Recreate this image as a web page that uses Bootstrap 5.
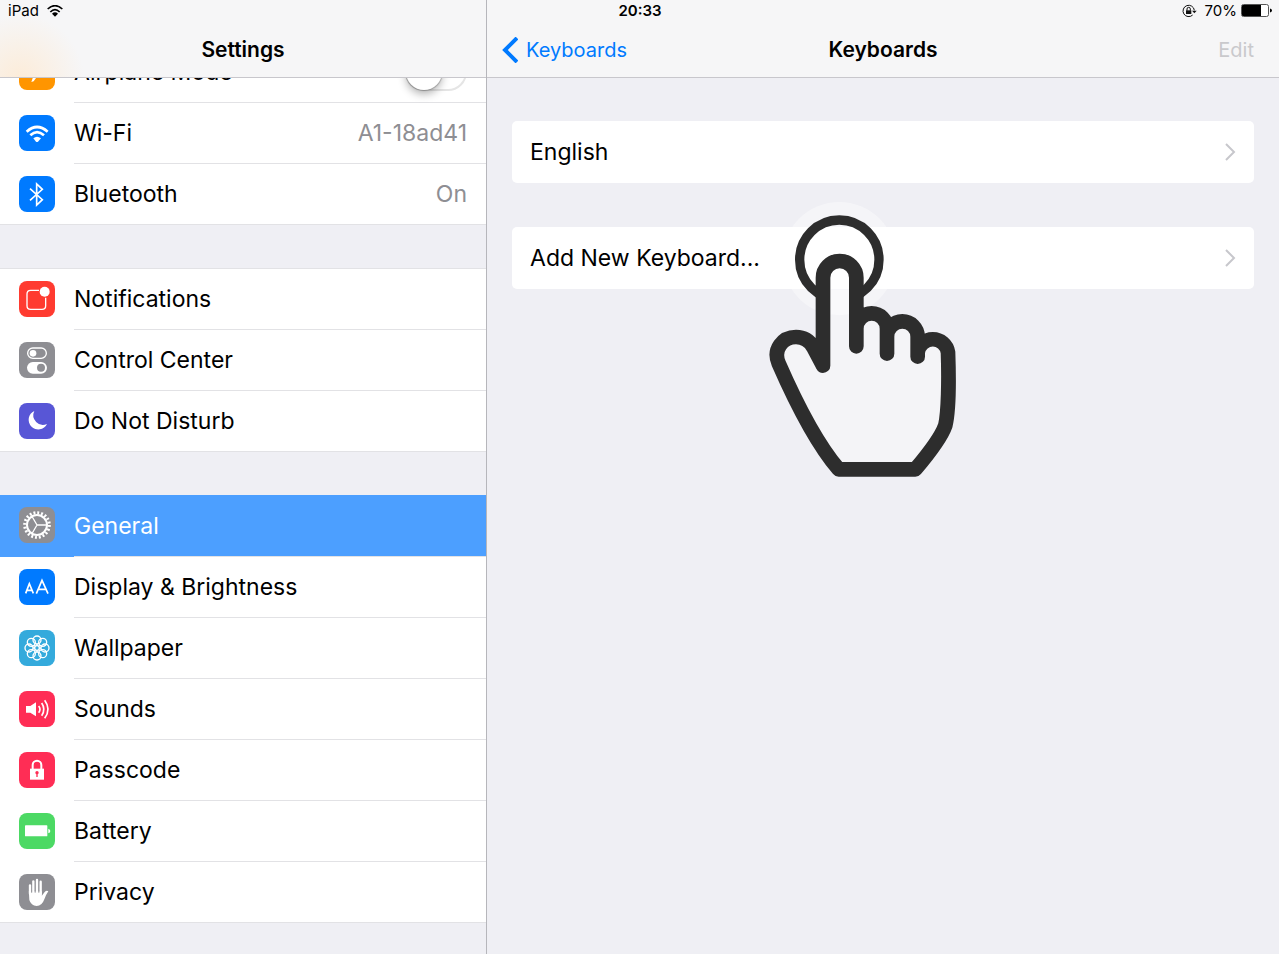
<!DOCTYPE html>
<html lang="en">
<head>
<meta charset="utf-8">
<meta name="viewport" content="width=device-width, initial-scale=1">
<title>Settings – Keyboards</title>
<link href="https://cdn.jsdelivr.net/npm/bootstrap@5.3.0/dist/css/bootstrap.min.css" rel="stylesheet">
<style>
  :root { --ios-blue: #007aff; --ios-bg: #efeff4; --ios-line: #c8c7cc; --ios-sep: #e2e2e5; --ios-gray: #8e8e93; }
  body { font-family: Inter, "Liberation Sans", sans-serif; font-size: 23px; line-height: 28px; color: #000; background: var(--ios-bg); }
  a { color: inherit; text-decoration: none; }
  .status-bar { height: 21px; font-size: 15px; line-height: 20px; padding: 0 7px 0 8px; z-index: 20; }
  .side { flex: 0 0 38%; min-width: 0; overflow: hidden; }
  .detail { min-width: 0; border-left: 1px solid #b6b6bb; }
  .bar { height: 78px; padding-top: 22px; background-color: #f6f6f7; border-bottom: 1px solid var(--ios-line); z-index: 5; }
  .side .bar { background-image: radial-gradient(circle at 20px 78px, #fcecd9 0, #f9f1e8 32px, rgba(246,246,247,0) 64px); }
  .bar h1, .bar h2 { font-size: 21px; line-height: 28px; font-weight: 600; }
  .bar a, .bar button { font-size: 20px; line-height: 28px; }
  .bar .back { color: var(--ios-blue); padding-left: 15px; gap: 8px; }
  .bar .edit { color: #c9c9cc; padding: 0 25px; border: 0; background: none; }
  .menu { margin-top: -37px; gap: 43px; padding-bottom: 30px; }
  .group { background: #fff; border: solid var(--ios-sep); border-width: 1px 0; }
  .entry { height: 61px; padding-left: 19px; gap: 19px; background: #fff; }
  .group .entry:last-child { height: 60px; }
  .entry-body { border-bottom: 1px solid var(--ios-sep); padding-right: 19px; }
  .entry:last-child .entry-body { border-bottom: 0; }
  .entry.selected { margin-top: -1px; height: 62px; background: #4c9fff; color: #fff; }
  .entry-value { color: var(--ios-gray); }
  .tile { width: 36px; height: 36px; flex: none; align-self: flex-start; margin-top: 12px; border-radius: 8px; display: block; }
  .toggle { appearance: none; width: 62px; height: 38px; margin: 0; border: 2px solid #e5e5e5; border-radius: 19px; background: #fff; }
  .toggle::before { content: ""; display: block; width: 36px; height: 36px; margin: -1px; border-radius: 50%; background: #fff; box-shadow: 0 0 1px 1px rgba(0,0,0,.2), 0 4px 8px rgba(0,0,0,.3); }
  .toggle:checked { background: #4cd964; }
  .toggle:checked::before { margin-left: 23px; }
  .content { padding: 43px 25px; gap: 44px; }
  .choice { height: 62px; padding: 0 18px; border-radius: 5px; background: #fff; }
  .tap { left: calc(50% - 143px); top: -37px; pointer-events: none; }
</style>
</head>
<body>
<div class="status-bar position-absolute top-0 start-0 end-0 d-flex align-items-center">
  <div class="d-flex align-items-center flex-fill w-50 gap-2">
    <span>iPad</span>
    <svg width="16" height="12" viewBox="0 0 48 36" fill="none" stroke="#000" stroke-width="5" aria-hidden="true"><path d="M2 12Q24-8 46 12M10 21Q24 7 38 21"/><path d="M15 26Q24 18 33 26L24 35Z" fill="#000" stroke="none"/></svg>
  </div>
  <span class="fw-semibold">20:33</span>
  <div class="d-flex align-items-center justify-content-end flex-fill w-50">
    <svg class="me-2" width="15" height="14" viewBox="0 0 45 42" fill="none" stroke="#111" aria-hidden="true"><path d="M32 33A17 17 0 1 1 37 19" stroke-width="3"/><path d="M30 20H44L37 28Z" fill="#111" stroke="none"/><path d="M12 19H28V30H12Z" fill="#111" stroke="none"/><path d="M15 20V15a5 5 0 0 1 10 0V20" stroke-width="3"/></svg>
    <span class="me-1">70%</span>
    <svg width="31" height="13" viewBox="0 0 31 13" aria-hidden="true"><rect x=".5" y=".5" width="27" height="12" rx="2" fill="#fff" stroke="#555"/><path d="M1 1.500Q1 1 2 1H20V12H2Q1 12 1 11Z"/><path d="M29 4.500Q31 5 31 6.500T29 8.500Z"/></svg>
  </div>
</div>

<div class="d-flex min-vh-100">
  <nav class="side" aria-label="Settings">
    <header class="bar position-relative d-flex align-items-center justify-content-center">
      <h1 class="m-0">Settings</h1>
    </header>
    <div class="menu d-flex flex-column">
      <div class="group">
        <div class="entry d-flex align-items-center">
          <svg class="tile" viewBox="0 0 108 108" style="background:#ff9500" aria-hidden="true"><path d="M88 46L64 54L44 82L37 84L46 58L28 60L22 67L18 65L21 54L16 43L20 41L28 48L45 46L33 22L39 20L61 43Z" fill="#fff"/></svg>
          <div class="entry-body d-flex align-items-center flex-fill h-100">
            <label class="me-auto" for="airplane">Airplane Mode</label>
            <input class="toggle" type="checkbox" role="switch" id="airplane">
          </div>
        </div>
        <a href="#" class="entry d-flex align-items-center">
          <svg class="tile" viewBox="0 0 108 108" style="background:#007aff" aria-hidden="true"><g fill="none" stroke="#fff" stroke-width="8"><path d="M23 50Q54 22 86 50M34 61Q54 42 75 61"/></g><path d="M43 70Q54 61 66 70L57 80Q54 82 51 80Z" fill="#fff"/></svg>
          <span class="entry-body d-flex align-items-center flex-fill h-100"><span class="me-auto">Wi-Fi</span><span class="entry-value">A1-18ad41</span></span>
        </a>
        <a href="#" class="entry d-flex align-items-center">
          <svg class="tile" viewBox="0 0 108 108" style="background:#007aff" aria-hidden="true"><path d="M33 38L70 71L53 87V24L70 40L33 73" fill="none" stroke="#fff" stroke-width="5"/></svg>
          <span class="entry-body d-flex align-items-center flex-fill h-100"><span class="me-auto">Bluetooth</span><span class="entry-value">On</span></span>
        </a>
      </div>

      <div class="group">
        <a href="#" class="entry d-flex align-items-center">
          <svg class="tile" viewBox="0 0 108 108" style="background:#ff3b30" aria-hidden="true"><path d="M60 28H35Q24 28 24 39V74Q24 85 35 85H69Q80 85 80 74V50" fill="none" stroke="#fff" stroke-width="4"/><circle cx="77" cy="32" r="15" fill="#fff"/></svg>
          <span class="entry-body d-flex align-items-center flex-fill h-100">Notifications</span>
        </a>
        <a href="#" class="entry d-flex align-items-center">
          <svg class="tile" viewBox="0 0 108 108" style="background:#8e8e93" aria-hidden="true"><rect x="26" y="18" width="56" height="31" rx="15.500" fill="none" stroke="#fff" stroke-width="4"/><circle cx="42" cy="34" r="10" fill="#fff"/><rect x="24" y="60" width="60" height="35" rx="17.500" fill="#fff"/><circle cx="66" cy="77" r="12" fill="#8e8e93"/></svg>
          <span class="entry-body d-flex align-items-center flex-fill h-100">Control Center</span>
        </a>
        <a href="#" class="entry d-flex align-items-center">
          <svg class="tile" viewBox="0 0 108 108" style="background:#5856d6" aria-hidden="true"><path d="M46 24A29 29 0 1 0 84 63A29 29 0 0 1 46 24Z" fill="#fff"/></svg>
          <span class="entry-body d-flex align-items-center flex-fill h-100">Do Not Disturb</span>
        </a>
      </div>

      <div class="group">
        <a href="#" class="entry selected d-flex align-items-center" aria-current="page">
          <svg class="tile" viewBox="0 0 108 108" style="background:#8e8e93" fill="none" stroke="#fff" aria-hidden="true"><circle cx="54" cy="54" r="30" stroke-width="6"/><circle cx="54" cy="54" r="37" stroke-width="9" pathLength="80" stroke-dasharray="2 2"/><path d="M54 54H82M54 54L40 30M54 54L40 78" stroke-width="4"/></svg>
          <span class="entry-body d-flex align-items-center flex-fill h-100">General</span>
        </a>
        <a href="#" class="entry d-flex align-items-center">
          <svg class="tile" viewBox="0 0 108 108" style="background:#007aff" fill="none" stroke="#fff" aria-hidden="true"><path d="M20 73L31 44L43 73M24 64H39" stroke-width="5"/><path d="M52 74L69 34L87 74M58 61H81" stroke-width="5"/></svg>
          <span class="entry-body d-flex align-items-center flex-fill h-100">Display &amp; Brightness</span>
        </a>
        <a href="#" class="entry d-flex align-items-center">
          <svg class="tile" viewBox="0 0 108 108" style="background:#34aadc" fill="none" stroke="#fff" stroke-width="4" aria-hidden="true"><circle cx="54" cy="30" r="12"/><circle cx="71" cy="37" r="12"/><circle cx="78" cy="54" r="12"/><circle cx="71" cy="71" r="12"/><circle cx="54" cy="78" r="12"/><circle cx="37" cy="71" r="12"/><circle cx="30" cy="54" r="12"/><circle cx="37" cy="37" r="12"/><circle cx="54" cy="54" r="7"/><path d="M54 42V47M54 61V66M42 54H47M61 54H66M46 46L49 49M59 59L62 62M46 62L49 59M59 49L62 46"/></svg>
          <span class="entry-body d-flex align-items-center flex-fill h-100">Wallpaper</span>
        </a>
        <a href="#" class="entry d-flex align-items-center">
          <svg class="tile" viewBox="0 0 108 108" style="background:#ff2d55" aria-hidden="true"><path d="M21 45H34L51 34V76L34 65H21Z" fill="#fff"/><path d="M59 45Q67 55 59 65M68 36Q81 55 68 74M77 28Q97 55 77 82" fill="none" stroke="#fff" stroke-width="5"/></svg>
          <span class="entry-body d-flex align-items-center flex-fill h-100">Sounds</span>
        </a>
        <a href="#" class="entry d-flex align-items-center">
          <svg class="tile" viewBox="0 0 108 108" style="background:#ff2d55" aria-hidden="true"><path d="M41 52V39a13 13 0 0 1 26 0V52" fill="none" stroke="#fff" stroke-width="6"/><rect x="33" y="50" width="42" height="33" fill="#fff"/><circle cx="54" cy="62" r="5" fill="#ff2d55"/><path d="M52 62H56V75H52Z" fill="#ff2d55"/></svg>
          <span class="entry-body d-flex align-items-center flex-fill h-100">Passcode</span>
        </a>
        <a href="#" class="entry d-flex align-items-center">
          <svg class="tile" viewBox="0 0 108 108" style="background:#4cd964" fill="#fff" aria-hidden="true"><rect x="18" y="37" width="67" height="33" rx="2"/><path d="M88 47Q94 49 94 54T88 61Z"/></svg>
          <span class="entry-body d-flex align-items-center flex-fill h-100">Battery</span>
        </a>
        <a href="#" class="entry d-flex align-items-center">
          <svg class="tile" viewBox="0 0 108 108" style="background:#8e8e93" aria-hidden="true"><g fill="none" stroke="#fff" stroke-width="7" stroke-linecap="round"><path d="M33 34V60M43 22V60M54 18V60M65 23V60"/></g><path d="M29.500 52H68.500V65L77 54Q83 48 88 52Q82 60 76 76Q69 96 53 96Q36 95 31 78Z" fill="#fff"/><path d="M38 50V56M48.500 50V56M59.500 50V56" stroke="#8e8e93" stroke-width="3"/></svg>
          <span class="entry-body d-flex align-items-center flex-fill h-100">Privacy</span>
        </a>
      </div>
    </div>
  </nav>

  <main class="detail flex-fill">
    <header class="bar d-flex align-items-center">
      <div class="d-flex flex-fill w-50">
        <a href="#" class="back d-flex align-items-center">
          <svg width="16" height="26" viewBox="0 0 16 26" fill="none" stroke="currentColor" stroke-width="4" aria-hidden="true"><path d="M15 1L3 13L15 25"/></svg>Keyboards
        </a>
      </div>
      <h2 class="m-0">Keyboards</h2>
      <div class="d-flex justify-content-end flex-fill w-50"><button type="button" class="edit" disabled>Edit</button></div>
    </header>
    <div class="content d-flex flex-column">
      <a href="#" class="choice d-flex align-items-center justify-content-between">English
        <svg width="11" height="18" viewBox="0 0 11 18" fill="none" stroke="#c7c7cc" stroke-width="2" aria-hidden="true"><path d="M1 1L9 9L1 17"/></svg>
      </a>
      <div class="position-relative">
        <a href="#" class="choice d-flex align-items-center justify-content-between">Add New Keyboard...
          <svg width="11" height="18" viewBox="0 0 11 18" fill="none" stroke="#c7c7cc" stroke-width="2" aria-hidden="true"><path d="M1 1L9 9L1 17"/></svg>
        </a>
        <svg class="tap position-absolute" width="240" height="300" viewBox="0 0 720 900" aria-hidden="true">
          <circle cx="298" cy="206" r="170" fill="#fff" fill-opacity=".4"/>
          <circle cx="298" cy="209" r="119" fill="none" stroke="#2d2d2d" stroke-width="28"/>
          <path d="M249 263a50 50 0 0 1 100 0V416a46 46 0 0 1 92 0V440a46 46 0 0 1 92 0V487a46 46 0 0 1 91 0C627 570 625 668 616 706C605 738 570 786 526 838H296C236 768 172 648 116 520C98 478 128 441 168 441C196 441 211 456 220 472L249 527Z" fill="#f4f4f7"/>
          <path d="M271 298V263a27 27 0 0 1 56 0V298Z" fill="#fff"/>
          <path d="M271 298H327V373Q298 378 271 373Z" fill="#f9f9fb"/>
          <g fill="none" stroke="#2d2d2d" stroke-width="44" stroke-linecap="round" stroke-linejoin="round"><path d="M349 469V263a50 50 0 0 0-100 0V527L220 472C211 456 196 441 168 441C128 441 98 478 116 520C172 648 236 768 296 838H526C570 786 605 738 616 706C625 668 627 570 624 487a46 46 0 0 0-91 0V500M349 416a46 46 0 0 1 92 0V491M441 440a46 46 0 0 1 92 0V500"/></g>
        </svg>
      </div>
    </div>
  </main>
</div>
<script src="https://cdn.jsdelivr.net/npm/bootstrap@5.3.0/dist/js/bootstrap.bundle.min.js"></script>
</body>
</html>
